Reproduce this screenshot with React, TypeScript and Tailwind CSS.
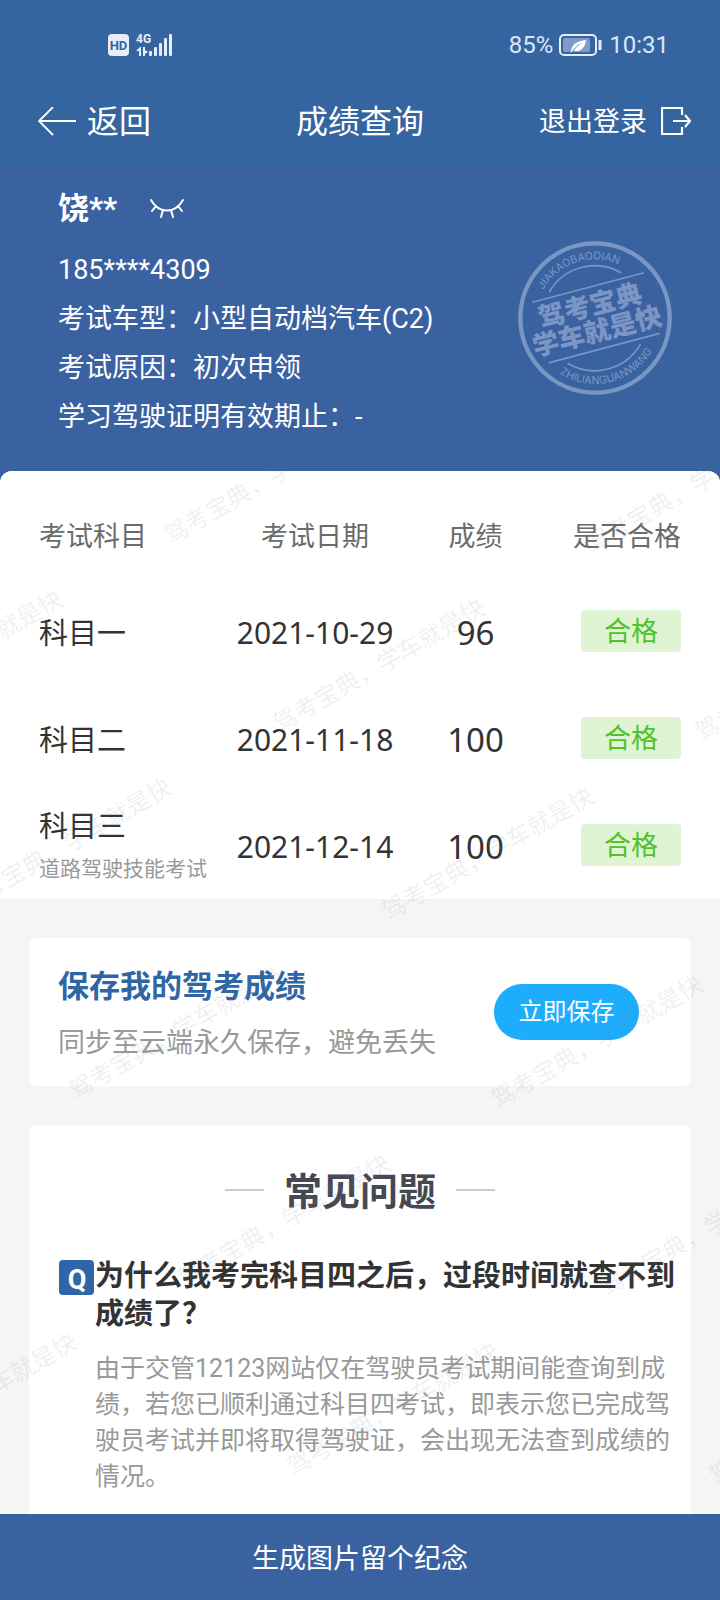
import { useId } from 'react';

interface ExamRecord {
  subject: string;
  note?: string;
  date: string;
  score: number;
  result: string;
}

const records: ExamRecord[] = [
  { subject: '科目一', date: '2021-10-29', score: 96, result: '合格' },
  { subject: '科目二', date: '2021-11-18', score: 100, result: '合格' },
  { subject: '科目三', note: '道路驾驶技能考试', date: '2021-12-14', score: 100, result: '合格' },
];

const profile = [
  '185****4309',
  '考试车型：小型自动档汽车(C2)',
  '考试原因：初次申领',
  '学习驾驶证明有效期止：-',
];

// Watermark text repeats on a grid that is turned by 30 degrees
const marks: { x: number; y: number }[] = [];
for (let i = -3; i < 9; i++) {
  for (let j = -4; j < 6; j++) {
    const x = 170 + 109 * i + 313 * j;
    const y = 74 + 188 * i - 179 * j;
    if (x > -200 && x < 720 && y > 0 && y < 1130) marks.push({ x, y });
  }
}

function StatusBar() {
  return (
    <div className="flex h-[90px] items-center justify-between pr-[51px] pl-[107px] text-2xl leading-6 text-[#dce7f7]">
      <svg width="66" height="24" viewBox="0 0 66 24" fill="#e6eefa" aria-label="HD 4G">
        <rect x="1" y="1" width="21" height="22" rx="4" />
        <text x="11.5" y="16.5" fontSize="13" fontWeight="700" textAnchor="middle" fill="#3565a0">HD</text>
        <text x="29" y="10" fontSize="12" fontWeight="700">4G</text>
        <path d="M29 18l4-4h1v9h-2v-5zM36 14h2v3l3 2-3 2v2h-2z" />
        <rect x="42" y="18" width="3" height="5" rx="1" />
        <rect x="47" y="14" width="3" height="9" rx="1" />
        <rect x="52" y="10" width="3" height="13" rx="1" />
        <rect x="57" y="5" width="3" height="18" rx="1" />
        <rect x="62" y="1" width="3" height="22" rx="1" />
      </svg>
      <div className="flex items-center">
        <span>85%</span>
        <svg className="mx-1.5" width="44" height="24" viewBox="0 0 44 24" fill="none" aria-hidden="true">
          <rect x="1" y="2" width="36" height="20" rx="4" stroke="#e6eefa" strokeWidth="2" />
          <rect x="4" y="5" width="27" height="14" rx="2" fill="#7d9cca" />
          <path d="M12 20c0-9 6-12 15-13-1 8-5 12-12 11 2-4 5-6 8-8-4 1-8 5-11 10z" fill="#fff" />
          <path d="M41 7v10" stroke="#e6eefa" strokeWidth="3" />
        </svg>
        <span>10:31</span>
      </div>
    </div>
  );
}

function NavBar() {
  return (
    <nav className="grid h-[75px] grid-cols-[1fr_auto_1fr] items-center px-[29px] pb-3 text-white">
      <button type="button" className="flex items-center gap-[10px] justify-self-start pl-2 text-[32px] leading-10">
        <svg width="40" height="30" viewBox="0 0 40 30" fill="none" stroke="currentColor" strokeWidth="1.8" aria-hidden="true">
          <path d="M39 14H2M16 0L2 14l14 14" />
        </svg>
        返回
      </button>
      <h1 className="text-[32px] leading-10">成绩查询</h1>
      <button type="button" className="flex items-center gap-[14px] justify-self-end text-[27px] leading-10">
        退出登录
        <svg width="30" height="30" viewBox="0 0 30 30" fill="none" stroke="currentColor" strokeWidth="2.2" aria-hidden="true">
          <path d="M21 8V1H1v26h20v-7M12 14h17M24 8l5 6-5 6" />
        </svg>
      </button>
    </nav>
  );
}

function Stamp() {
  const id = useId();
  return (
    <svg className="size-[154px] shrink-0" viewBox="57 35 460 460" fill="none" stroke="#7b95c4" aria-hidden="true">
      <defs>
        <path id={`${id}t`} d="M133 181A175 175 0 0 1 455 218" />
        <path id={`${id}b`} d="M181 431A197 197 0 0 0 484 265" />
      </defs>
      <circle cx="287" cy="265" r="223" strokeWidth="13" />
      <path d="M100 218l333-88M148 399l332-88" strokeWidth="5" />
      <path d="M150 188A157 157 0 0 1 365 130M205 400A158 158 0 0 0 423 343" strokeWidth="5" />
      <g fill="#7b95c4" stroke="none">
        <g className="font-[Inter,sans-serif]" fontSize="32">
          <text><textPath href={`#${id}t`}>JIAKAOBAODIAN</textPath></text>
          <text><textPath href={`#${id}b`}>ZHILIANGUANWANG</textPath></text>
        </g>
        <g fontSize="79" fontWeight="900" textAnchor="middle">
          <text transform="translate(279 255) rotate(-14)">驾考宝典</text>
          <text transform="translate(300 332) rotate(-14)">学车就是快</text>
        </g>
      </g>
    </svg>
  );
}

function Profile() {
  return (
    <section className="flex items-center justify-between bg-[#3b62a0] pr-12 pl-[58px] text-white">
      <div className="pt-[22px] pb-[29px]">
        <div className="flex items-center gap-8">
          <h2 className="text-[31px] leading-[44px] font-bold">饶**</h2>
          <button type="button" aria-label="显示姓名">
            <svg width="36" height="22" viewBox="0 0 36 22" fill="none" stroke="currentColor" strokeWidth="2" strokeLinecap="round">
              <path d="M2 2c8 14 24 14 32 0M7 8l-4 5M14 12l-2 7M22 12l2 7M29 8l4 5" />
            </svg>
          </button>
        </div>
        <div className="mt-[15px] text-[27px] leading-[49px]">
          {profile.map((line) => (
            <p key={line}>{line}</p>
          ))}
        </div>
      </div>
      <Stamp />
    </section>
  );
}

function ScoreTable() {
  return (
    <div className="bg-white px-[39px]">
      <table className="w-full table-fixed">
        <thead className="text-[27px] leading-9 text-[#6b6b6b]">
          <tr className="h-[107px]">
            <th className="w-[29%] pt-6 text-left font-normal">考试科目</th>
            <th className="w-[28%] pt-6 text-center font-normal">考试日期</th>
            <th className="w-[22%] pt-6 text-center font-normal">成绩</th>
            <th className="w-[21%] pt-6 text-right font-normal">是否合格</th>
          </tr>
        </thead>
        <tbody className="text-[#333]">
          {records.map((r) => (
            <tr key={r.subject} className="h-[107px]">
              <td className="pt-1 text-[29px] leading-[42px] whitespace-nowrap">
                {r.subject}
                {r.note && <p className="text-[21px] text-[#999]">{r.note}</p>}
              </td>
              <td className="pt-0.5 text-center font-['Noto_Sans',sans-serif] text-[30px] leading-[42px] whitespace-nowrap">{r.date}</td>
              <td className="pt-0.5 text-center font-['Noto_Sans',sans-serif] text-[33px] leading-[42px]">{r.score}</td>
              <td className="pb-0.5 text-right">
                <span className="inline-block w-[100px] rounded bg-[#dff4d2] pt-0.5 text-center align-middle text-[27px] leading-10 text-[#52c22b]">
                  {r.result}
                </span>
              </td>
            </tr>
          ))}
        </tbody>
      </table>
    </div>
  );
}

function SaveCard() {
  return (
    <section className="mx-[29px] mt-[39px] flex items-center justify-between rounded-lg bg-white py-6 pr-[52px] pl-[29px]">
      <div>
        <h2 className="text-[31px] leading-[50px] font-bold text-[#2f66a5]">保存我的驾考成绩</h2>
        <p className="mt-3 text-[27px] leading-[38px] text-[#999]">同步至云端永久保存，避免丢失</p>
      </div>
      <button type="button" className="h-14 w-[145px] rounded-full bg-[#1dadfc] text-2xl text-white">
        立即保存
      </button>
    </section>
  );
}

function Faq() {
  return (
    <section className="mx-[29px] mt-[39px] grow rounded-t-lg bg-white pt-[38px] pb-[19px]">
      <div className="flex items-center justify-center gap-5">
        <span className="h-0.5 w-[39px] bg-[#ccc]" />
        <h2 className="pt-1 text-[38px] leading-[50px] font-bold text-[#454954]">常见问题</h2>
        <span className="h-0.5 w-[39px] bg-[#ccc]" />
      </div>
      <div className="mt-10 flex items-start pr-2 pl-[30px]">
        <svg className="mt-[3px] size-9 shrink-0" viewBox="0 0 36 36" aria-hidden="true">
          <rect width="35" height="35" rx="4" fill="#2f66a8" />
          <text x="18" y="29" fontSize="27" fontWeight="700" textAnchor="middle" fill="#fff">Q</text>
        </svg>
        <div>
          <h3 className="text-[29px] leading-[38px] font-bold text-[#333]">
            为什么我考完科目四之后，过段时间就查不到成绩了？
          </h3>
          <p className="mt-[18px] text-[25px] leading-9 text-[#999]">
            由于交管12123网站仅在驾驶员考试期间能查询到成绩，若您已顺利通过科目四考试，即表示您已完成驾驶员考试并即将取得驾驶证，会出现无法查到成绩的情况。
          </p>
        </div>
      </div>
    </section>
  );
}

function Watermark() {
  return (
    <svg className="pointer-events-none absolute inset-0 size-full" fill="#78828f" fillOpacity="0.12" fontSize="24" aria-hidden="true">
      {marks.map(({ x, y }) => (
        <text key={`${x},${y}`} transform={`translate(${x} ${y}) rotate(-30)`}>驾考宝典，学车就是快</text>
      ))}
    </svg>
  );
}

export default function App() {
  return (
    <div className="flex min-h-screen flex-col bg-[#3b62a0] font-['Roboto','Noto_Sans_CJK_SC',sans-serif]">
      <header className="bg-[#3565a0]">
        <StatusBar />
        <NavBar />
      </header>
      <Profile />
      <main className="relative flex grow flex-col overflow-hidden rounded-t-xl bg-[#f5f5f5]">
        <ScoreTable />
        <SaveCard />
        <Faq />
        <Watermark />
      </main>
      <footer className="sticky bottom-0">
        <button type="button" className="h-[87px] w-full bg-[#3b62a0] pt-1 text-[27px] text-white">
          生成图片留个纪念
        </button>
      </footer>
    </div>
  );
}
